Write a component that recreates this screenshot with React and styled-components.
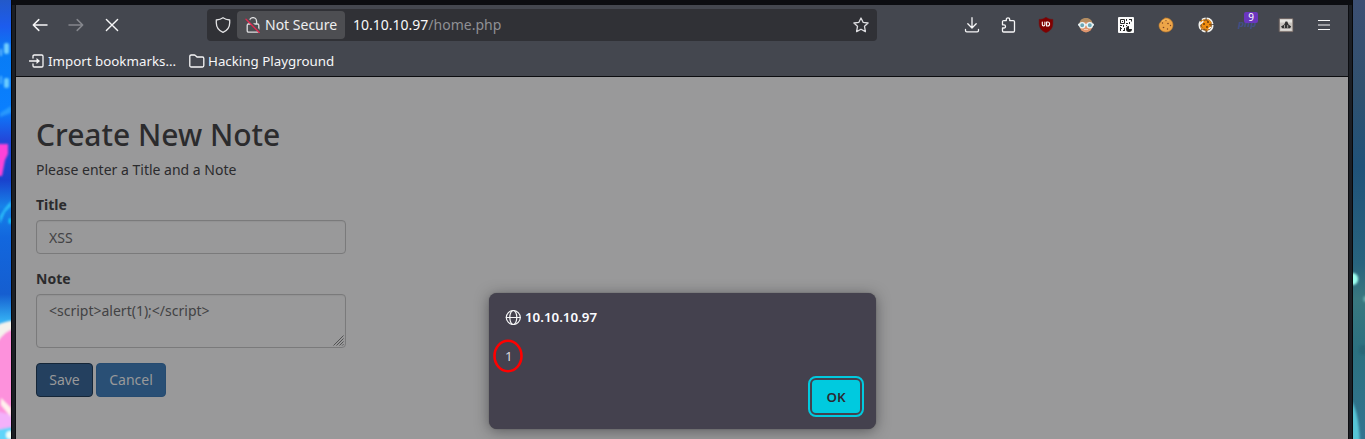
import React from "react";
import styled, { createGlobalStyle } from "styled-components";

const GlobalStyle = createGlobalStyle`
  * { box-sizing: border-box; }
  html, body { margin: 0; padding: 0; background: #0c0d11; overflow: hidden; }
  body { font-family: "Noto Sans", sans-serif; }
  svg { display: block; flex: none; }
`;

const Desktop = styled.div`
  display: grid;
  grid-template-columns: 11px 1342px 12px;
  width: 1365px;
  height: 439px;
  overflow: hidden;
`;

const Wallpaper = styled.div`
  height: 439px;
  overflow: hidden;
  background: ${(p) => p.$fill};
`;

const WindowFrame = styled.div`
  position: relative;
  display: flex;
  flex-direction: column;
  width: 1342px;
  height: 439px;
  padding: 5px 4px 0 4px;
  border-left: 1px solid #06070a;
  border-right: 1px solid #06070a;
  background: linear-gradient(#0c0d11 0 5px, transparent 5px), #1b1e24;
`;

const Browser = styled.div`
  display: flex;
  flex-direction: column;
  flex: 1;
  box-shadow: -1px 0 #0c0d11, 1px 0 #0c0d11;
`;

const Chrome = styled.header`
  height: 72px;
  background: #44474f;
  border-bottom: 1px solid #0c0d10;
  color: #f6f6f7;
`;

const NavBar = styled.div`
  display: flex;
  align-items: center;
  height: 40px;
  padding-left: 16px;
`;

const NavIcons = styled.div`
  display: flex;
  gap: 20px;
  width: 175px;
`;

const UrlBar = styled.div`
  display: flex;
  align-items: center;
  width: 670px;
  height: 32px;
  padding: 0 8px;
  border-radius: 4px;
  background: #303136;
  font-size: 14px;
  line-height: 28px;
  white-space: nowrap;
`;

const Identity = styled.div`
  display: flex;
  align-items: center;
  gap: 4px;
  width: 108px;
  height: 28px;
  margin: 0 8px 0 6px;
  padding-left: 8px;
  border-radius: 4px;
  background: #4d4e52;
  color: #eeeeef;
`;

const Address = styled.div`
  flex: 1;
  color: #8f9094;
  b { font-weight: 400; color: #f8f8f9; }
`;

const Extensions = styled.div`
  display: flex;
  align-items: center;
  gap: 24px;
  margin-left: 87px;
`;

const BarAction = styled.div`
  margin-right: -3px;
`;

const MenuAction = styled.div`
  margin-left: -2px;
`;

const BadgeAnchor = styled.div`
  position: relative;
  width: 16px;
  height: 16px;
`;

const PhpMark = styled.span`
  position: absolute;
  left: 0;
  top: -1px;
  color: #414f86;
  font: italic 700 8.5px/16px "DejaVu Sans", sans-serif;
`;

const Badge = styled.span`
  position: absolute;
  left: 6px;
  top: -5px;
  width: 14px;
  height: 11px;
  border-radius: 2px;
  background: #6b36bf;
  color: #fff;
  font-size: 10px;
  line-height: 11px;
  text-align: center;
`;

const Bookmarks = styled.div`
  display: flex;
  align-items: center;
  gap: 12px;
  height: 32px;
  padding-left: 13px;
  font-size: 13.33px;
  line-height: 18px;
`;

const Bookmark = styled.div`
  display: flex;
  align-items: center;
  gap: 3px;
  width: ${(p) => p.$width || "auto"};
  white-space: nowrap;
`;

const Page = styled.main`
  flex: 1;
  padding: 41px 20px 0;
  background: #99999a;
  color: #2b2b2d;
  font-size: 14px;
  line-height: 20px;
`;

const Heading = styled.h2`
  margin: 0 0 9px;
  font-size: 30px;
  font-weight: 500;
  line-height: 33px;
`;

const Lead = styled.p`
  margin: 0 0 15px;
`;

const Field = styled.label`
  display: block;
  width: 310px;
  margin-bottom: 15px;
  font-weight: 700;
`;

const control = `
  display: block;
  width: 100%;
  margin-top: 5px;
  padding: 6px 12px;
  border: 1px solid #7a7a7b;
  border-radius: 4px;
  background: transparent;
  box-shadow: inset 0 1px 1px rgba(0, 0, 0, 0.05);
  color: #424244;
  font: 400 14px/20px "Noto Sans", sans-serif;
  outline: none;
`;

const TextInput = styled.input`
  ${control}
  height: 34px;
`;

const NoteBox = styled.div`
  ${control}
  display: flex;
  height: 54px;
  justify-content: space-between;
  padding: 6px 1px 1px 12px;
  svg { align-self: flex-end; }
`;

const Button = styled.button`
  height: 34px;
  width: ${(p) => p.$width};
  margin-right: 3px;
  padding: 0;
  border: 1px solid ${(p) => (p.$active ? "#152638" : "#264b70")};
  border-radius: 4px;
  background: ${(p) => (p.$active ? "#24405f" : "#294f75")};
  color: #99999a;
  font: 400 14px/20px "Noto Sans", sans-serif;
`;

const Actions = styled.div`
  display: flex;
`;

const Dialog = styled.section`
  position: absolute;
  left: 477px;
  top: 293px;
  display: flex;
  flex-direction: column;
  width: 387px;
  height: 136px;
  padding: 16px 16px 0;
  border-radius: 8px;
  background: #44414e;
  box-shadow: 0 2px 14px rgba(30, 30, 34, 0.5), 0 0 1px rgba(30, 30, 34, 0.6);
  color: #fbfbfe;
  font-size: 13.33px;
  line-height: 18px;
`;

const DialogTitle = styled.div`
  display: flex;
  align-items: flex-start;
  gap: 4px;
  height: 17px;
  font-weight: 600;
  line-height: 16px;
`;

const Message = styled.div`
  position: relative;
  margin-top: 21px;
  color: #d9d8dd;
`;

const RedRing = styled.svg`
  position: absolute;
  left: -14px;
  top: -9px;
`;

const OkButton = styled.button`
  align-self: flex-end;
  width: 48px;
  height: 33px;
  margin-top: 15px;
  padding: 1px 0 0;
  border: 0;
  border-radius: 4px;
  outline: 2px solid #00cadf;
  outline-offset: 2px;
  background: #00cadf;
  color: #2b2a33;
  font: 600 13.33px/32px "Noto Sans", sans-serif;
`;

const Icon = ({ children, size = 16, color = "#f6f6f7", width = 1.3 }) => (
  <svg width={size} height={size} viewBox="0 0 16 16" fill="none" stroke={color}
    strokeWidth={width} strokeLinecap="round" strokeLinejoin="round">{children}</svg>
);

const Arrow = ({ flip, color }) => (
  <Icon color={color} width={1.5}>
    <path d={flip ? "M1 8h13.5M9.2 2.6 14.7 8l-5.5 5.4" : "M15 8H1.5M6.8 2.6 1.3 8l5.5 5.4"} />
  </Icon>
);

const skyFill =
  "linear-gradient(#2359c9 0, #1c5cee 6%, #087cf5 12%, #0a7fff 25%, #2347d9 32%, #1942cd 41%, #1782e9 47%, #1267de 54%, #155ed0 67%, #34aef2 73%, #48cafa 100%)";

const seaFill =
  "linear-gradient(#3c4f73 0, #31516f 20%, #205279 38%, #28637e 60%, #39777f 68%, #2c7080 80%, #327490 100%)";

const LeftWallpaper = () => (
  <Wallpaper $fill={skyFill}>
    <svg width="11" height="439" viewBox="0 0 11 439">
      <defs>
        <filter id="soft" filterUnits="userSpaceOnUse" x="-5" y="-5" width="21" height="449"><feGaussianBlur stdDeviation="1" /></filter>
      </defs>
      <g filter="url(#soft)">
        <rect x="4" y="43" width="5" height="11" rx="2" fill="#71cdff" />
        <rect x="0" y="49" width="2" height="7" fill="#62b9ff" />
        <rect x="4" y="78" width="5" height="10" rx="2" fill="#69cbff" />
        <rect x="0" y="76" width="2" height="8" fill="#4cb0ff" />
        <path d="M0 113 11 106v7L0 117z" fill="#43b5ff" opacity=".5" />
        <path d="M-4 144H8v10L5 160 2 176H-4z" fill="#fd43d8" />
        <path d="M0 216 5 208 11 201v5L5 212 0 224z" fill="#29bdfa" />
        <ellipse cx="10" cy="221" rx="1.5" ry="3" fill="#18c9fa" />
        <path d="M-4 326Q7 320 16 321V444H-4z" fill="#f4f2ed" />
        <path d="M-4 344Q5 329 16 329V429L-4 431z" fill="#fd91dc" />
        <path d="M-4 411 16 416V426L-4 430z" fill="#f3b1fa" />
        <path d="M1 398 11 408v9L1 405z" fill="#fff2ed" />
        <path d="M-4 430 16 426v20H-4z" fill="#60d5fa" />
        <ellipse cx="10" cy="435" rx="4" ry="4" fill="#eefff9" />
      </g>
    </svg>
  </Wallpaper>
);

const RightWallpaper = () => (
  <Wallpaper $fill={seaFill}>
    <svg width="12" height="439" viewBox="0 0 12 439">
      <defs>
        <filter id="glow" filterUnits="userSpaceOnUse" x="-8" y="-8" width="28" height="455"><feGaussianBlur stdDeviation="1" /></filter>
      </defs>
      <g filter="url(#glow)">
        <ellipse cx="0" cy="279" rx="5.2" ry="6" fill="#9cfff0" />
        <ellipse cx="12" cy="299" rx="1.5" ry="3" fill="#70b6b6" />
        <ellipse cx="10" cy="350" rx="4" ry="5" fill="#285f72" opacity=".6" />
        <path d="M-4 398Q6 407 7 446H-4z" fill="#56c5d6" />
      </g>
    </svg>
  </Wallpaper>
);

const Ublock = () => (
  <Icon>
    <path d="M8 .3C5.5 2 3.4 2.3 1.1 2.3v4.2c0 4.7 2.6 7.4 6.9 9.2 4.3-1.8 6.9-4.5 6.9-9.2V2.3C12.6 2.3 10.5 2 8 .3z" fill="#800000" stroke="#68191c" strokeWidth=".5" />
    <path d="M4.3 5v2.4c0 2 2.6 2 2.6 0V5M8.6 5v4h1a2 2 0 0 0 0-4z" stroke="#fff" strokeWidth="1.1" />
  </Icon>
);

const Goggles = () => (
  <Icon>
    <ellipse cx="8" cy="8.4" rx="6.6" ry="7" fill="#df956d" stroke="none" />
    <path d="M1.5 7C1.7 2.5 4.7 1 8.3 1c3.7 0 6 2.4 6.2 6L12 4.5 8 5.3l-4-.6z" fill="#b38d62" stroke="none" />
    <path d="M.5 7.7h15" stroke="#dfe8ea" strokeWidth="2" />
    <circle cx="4.2" cy="8.2" r="2.6" fill="#6ba6b5" stroke="#e9f4f6" strokeWidth="1.3" />
    <circle cx="11.8" cy="8.2" r="2.6" fill="#6ba6b5" stroke="#e9f4f6" strokeWidth="1.3" />
    <path d="M6.4 12.5h3.2" stroke="#f1c7b1" strokeWidth="1" />
  </Icon>
);

const QrCode = () => (
  <Icon>
    <rect width="16" height="16" rx="1" fill="#fbfbfb" stroke="none" />
    <g stroke="#292929" strokeWidth="1" strokeLinecap="butt" strokeLinejoin="miter">
      <path d="M2.5 2.5h4v4h-4zM8.5 2v2M8 6.5h2M11 2.5h3M13.5 2v2.5M11.5 5v2M2 8.5h2M5.5 8v2M2 11.5h2M2.5 10v4M5 13.5h2M6.5 11v2M8 8.5h1" />
    </g>
    <path d="M4 4h1v1H4z" fill="#222" stroke="none" />
    <path d="M11 9v3h3a3 3 0 1 1-3-3z" fill="#222" stroke="none" />
  </Icon>
);

const Cookie = () => (
  <Icon>
    <path d="M7 1.1C10 .2 15 3 15 8c0 4-3 7-7 7-4.2 0-7-3-7-6.5 0-2 .8-3 2-3.8C3.5 3 5 2.6 7 1.1z" fill="#eda548" stroke="#bd7a2c" strokeWidth=".6" />
    <g fill="#7d4522" stroke="none">
      <circle cx="8" cy="3.5" r=".7" /><circle cx="4.5" cy="6" r=".7" /><circle cx="10" cy="6.5" r=".8" />
      <circle cx="5.5" cy="10.5" r=".8" /><circle cx="12.5" cy="8.5" r=".7" /><circle cx="9.5" cy="12" r=".7" />
    </g>
    <path d="M4 4.3c2-1.8 4.5-2 6.5-1" stroke="#ffc86d" strokeWidth=".7" />
  </Icon>
);

const CookieRefresh = () => (
  <Icon>
    <circle cx="8" cy="8" r="6.7" fill="#80511f" stroke="#f2f2ee" strokeWidth="1.7" strokeDasharray="9 2 4 1" strokeLinecap="butt" />
    <path d="M3.5 9.5 4 6l3-2.500 5 .5 1 3-1.500 4-4 1.500z" fill="#f08c0e" stroke="none" />
    <path d="M3 4.500 6 2.800M3 10.500l2.300 1.200M9 13l3.500-3M10 2.700l3 3" stroke="#f2931d" strokeWidth="1.2" />
    <g fill="#5c3209" stroke="none">
      <circle cx="6" cy="7" r=".9" /><circle cx="10" cy="5" r=".9" /><circle cx="9" cy="10" r=".9" /><circle cx="12" cy="7.5" r=".7" />
    </g>
    <path d="M2.500 7 5 4.500M11 11.500l1.500-1" stroke="#fff" />
  </Icon>
);

const HatTile = () => (
  <Icon>
    <rect x="1.5" y="1.7" width="13.4" height="13" fill="#c9c5c0" stroke="#6e5e59" strokeWidth=".7" />
    <path d="M2 2.500h12v3H2z" fill="#e6e5e0" stroke="none" />
    <path d="M3 9.500 6.300 7.500 7.500 4.500h1.800L10.500 7.500l2.700 2-1.200 1.700H4.300z" fill="#333" stroke="none" />
    <path d="M6.500 8.500v2M9.700 8.500v2" stroke="#c1c1be" strokeWidth=".8" />
    <path d="M3 12.800h10" stroke="#f1efec" strokeWidth=".8" />
  </Icon>
);

export default function App() {
  return (
    <Desktop>
      <GlobalStyle />
      <LeftWallpaper />
      <WindowFrame>
        <Browser>
          <Chrome>
            <NavBar>
              <NavIcons>
                <Arrow />
                <Arrow flip color="#85878d" />
                <Icon width={1.4}><path d="m2.400 2.400 11.200 11.200M13.600 2.400 2.400 13.600" /></Icon>
              </NavIcons>
              <UrlBar>
                <Icon color="#e3e3e5"><path d="M8 .7c-2 1.400-4.400 2-6.700 2.300v2.700C1.300 10.200 4 13.600 8 15.400c4-1.800 6.700-5.200 6.700-9.700V3C12.400 2.700 10 2.100 8 .7z" /></Icon>
                <Identity>
                  <Icon color="#dedee0">
                    <path d="M4.400 7V4.200a3.600 3.600 0 0 1 7.200 0V7M3.500 7h9c.8 0 1.300.5 1.300 1.300v5.500c0 .8-.5 1.300-1.300 1.300h-9c-.8 0-1.300-.5-1.300-1.300V8.300C2.200 7.500 2.700 7 3.500 7z" />
                    <path d="M2.200 1.700 15 14.500" stroke="#4d4e52" strokeWidth="2" />
                    <path d="M1 2.300 14.300 15.500" stroke="#e22850" />
                  </Icon>
                  Not Secure
                </Identity>
                <Address><b>10.10.10.97</b>/home.php</Address>
                <Icon color="#dcdcdf"><path d="m8 1 2.100 4.300 5 .7-3.600 3.300.9 5.300L8 12.200l-4.400 2.400.9-5.300L.9 6l5-.7z" /></Icon>
              </UrlBar>
              <Extensions>
                <BarAction>
                  <Icon><path d="M8 .7v10M3.800 6.800 8 11l4.200-4.200M1.500 12.500v1c0 .8.5 1.300 1.300 1.300h10.400c.8 0 1.300-.5 1.300-1.300v-1" /></Icon>
                </BarAction>
                <BarAction>
                  <Icon><path d="M1.500 6V4.800c0-.8.400-1.200 1.200-1.200h2.600V2.300c0-2 3.400-2 3.400 0v1.300h3.600c.8 0 1.200.4 1.200 1.200v9c0 .8-.4 1.200-1.200 1.200H2.700c-.8 0-1.200-.4-1.200-1.200V11H3c2 0 2-3.200 0-3.200H1.500z" /></Icon>
                </BarAction>
                <Ublock />
                <Goggles />
                <QrCode />
                <Cookie />
                <CookieRefresh />
                <BadgeAnchor><PhpMark>php</PhpMark><Badge>9</Badge></BadgeAnchor>
                <HatTile />
                <MenuAction>
                  <Icon width={1.2}><path d="M2 3.500h12M2 8h12M2 12.500h12" strokeLinecap="butt" /></Icon>
                </MenuAction>
              </Extensions>
            </NavBar>
            <Bookmarks>
              <Bookmark $width="148px">
                <Icon><path d="M4 5V3.200C4 2.400 4.500 2 5.200 2h7.600c.8 0 1.200.4 1.200 1.200v9.600c0 .8-.4 1.200-1.200 1.200H5.200C4.500 14 4 13.600 4 12.800V11M.3 8H8.500" /><path d="m7.500 5 3.500 3-3.500 3z" fill="#f6f6f7" stroke="none" /></Icon>
                Import bookmarks...
              </Bookmark>
              <Bookmark>
                <Icon><path d="M.8 12.500v-9C.8 2.400 1.300 2 2.300 2h3c.5 0 .8.200 1.100.5L8 4h5.500c1 0 1.300.5 1.300 1.500v7c0 1-.5 1.500-1.300 1.500H2.300c-1 0-1.500-.5-1.500-1.500z" /></Icon>
                Hacking Playground
              </Bookmark>
            </Bookmarks>
          </Chrome>
          <Page>
            <Heading>Create New Note</Heading>
            <Lead>Please enter a Title and a Note</Lead>
            <Field>Title<TextInput readOnly value="XSS" /></Field>
            <Field as="div">
              Note
              <NoteBox>
                {"<script>alert(1);</script>"}
                <svg width="11" height="11" viewBox="0 0 11 11" stroke="#4a4a4b" strokeWidth=".9">
                  <path d="M.5 10.500l10-10M3.500 10.500l7-7M6.500 10.500l4-4M9.200 10.500l1.300-1.300" />
                </svg>
              </NoteBox>
            </Field>
            <Actions>
              <Button $active $width="57px">Save</Button>
              <Button $width="70px">Cancel</Button>
            </Actions>
          </Page>
        </Browser>
        <Dialog>
          <DialogTitle>
            <Icon width={1.2}><circle cx="8.300" cy="8.500" r="7" /><ellipse cx="8.300" cy="8.500" rx="3.500" ry="7" /><path d="M1.300 8.500h14" /></Icon>
            10.10.10.97
          </DialogTitle>
          <Message>
            1
            <RedRing width="34" height="36" viewBox="0 0 34 36"><ellipse cx="17" cy="18" rx="13.500" ry="15.200" fill="none" stroke="#f00" strokeWidth="2.600" /></RedRing>
          </Message>
          <OkButton>OK</OkButton>
        </Dialog>
      </WindowFrame>
      <RightWallpaper />
    </Desktop>
  );
}
